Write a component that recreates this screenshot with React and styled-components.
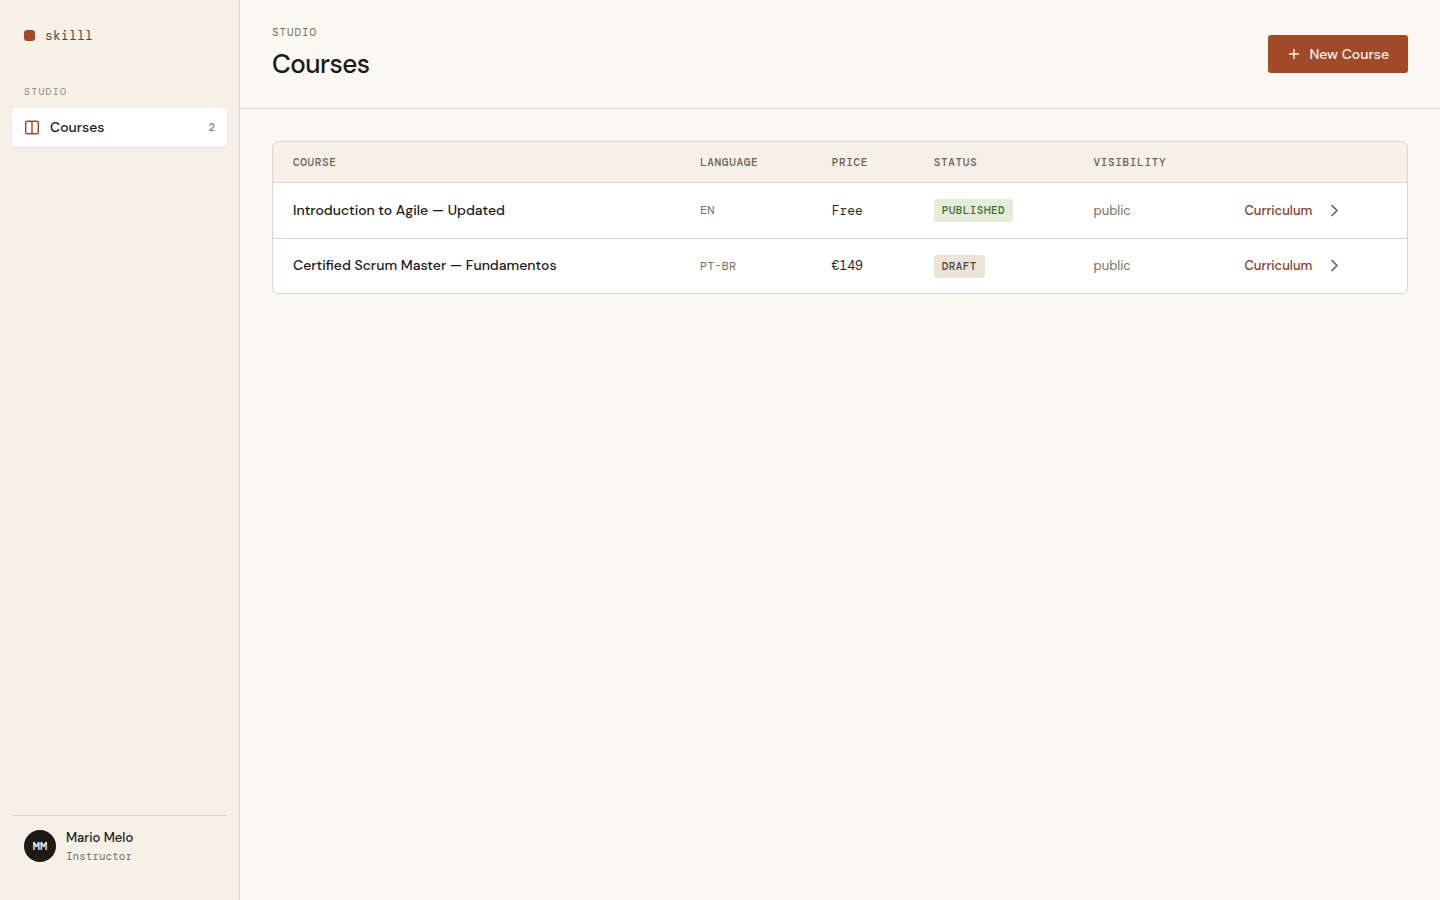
import React from "react";
import styled, { createGlobalStyle } from "styled-components";

const courses = [
  {
    id: 1,
    title: "Introduction to Agile — Updated",
    language: "EN",
    price: "Free",
    status: "Published",
    visibility: "public",
  },
  {
    id: 2,
    title: "Certified Scrum Master — Fundamentos",
    language: "PT-BR",
    price: "€149",
    status: "Draft",
    visibility: "public",
  },
];

const BookIcon = () => (
  <svg width="16" height="16" viewBox="0 0 16 16" fill="none" aria-hidden="true">
    <rect x="1.7" y="1.2" width="12.6" height="12.6" rx="1.5" stroke="currentColor" strokeWidth="1.4" />
    <path d="M8 1.200v12.600" stroke="currentColor" strokeWidth="1.4" />
  </svg>
);

const PlusIcon = () => (
  <svg width="14" height="14" viewBox="0 0 14 14" fill="none" aria-hidden="true">
    <path d="M7 2v10M2 7h10" stroke="currentColor" strokeWidth="1.4" />
  </svg>
);

const ChevronIcon = () => (
  <svg width="16" height="16" viewBox="0 0 16 16" fill="none" aria-hidden="true">
    <path d="M5.500 2L11 7.500 5.500 13" stroke="currentColor" strokeWidth="1.6" />
  </svg>
);

const App = () => {
  return (
    <>
      <GlobalStyle />
      <Layout>
        <Sidebar>
          <Brand href="#">
            <BrandMark />
            skilll
          </Brand>
          <SectionLabel>Studio</SectionLabel>
          <nav>
            <NavItem href="#courses" aria-current="page">
              <BookIcon />
              Courses
              <NavCount>{courses.length}</NavCount>
            </NavItem>
          </nav>
          <UserCard>
            <Avatar>MM</Avatar>
            <div>
              <UserName>Mario Melo</UserName>
              <UserRole>Instructor</UserRole>
            </div>
          </UserCard>
        </Sidebar>
        <Main>
          <PageHeader>
            <div>
              <Eyebrow>Studio</Eyebrow>
              <Title>Courses</Title>
            </div>
            <PrimaryButton type="button">
              <PlusIcon />
              New Course
            </PrimaryButton>
          </PageHeader>
          <Content>
            <TableCard>
              <Table>
                <colgroup>
                  <Col $width="35.9%" />
                  <Col $width="11.6%" />
                  <Col $width="9%" />
                  <Col $width="14.1%" />
                  <Col $width="13.3%" />
                  <Col />
                </colgroup>
                <thead>
                  <tr>
                    <th scope="col">Course</th>
                    <th scope="col">Language</th>
                    <th scope="col">Price</th>
                    <th scope="col">Status</th>
                    <th scope="col">Visibility</th>
                    <th scope="col" aria-label="Actions" />
                  </tr>
                </thead>
                <tbody>
                  {courses.map((course) => {
                    const { id, title, language, price, status, visibility } =
                      course;

                    return (
                      <tr key={id}>
                        <td>
                          <CourseName>{title}</CourseName>
                        </td>
                        <td>
                          <Language>{language}</Language>
                        </td>
                        <td>
                          <Price>{price}</Price>
                        </td>
                        <td>
                          <Badge $published={status === "Published"}>
                            {status}
                          </Badge>
                        </td>
                        <td>
                          <Visibility>{visibility}</Visibility>
                        </td>
                        <td>
                          <Actions>
                            <CurriculumLink href={`#curriculum-${id}`}>
                              Curriculum
                            </CurriculumLink>
                            <IconButton type="button" aria-label={`Open ${title}`}>
                              <ChevronIcon />
                            </IconButton>
                          </Actions>
                        </td>
                      </tr>
                    );
                  })}
                </tbody>
              </Table>
            </TableCard>
          </Content>
        </Main>
      </Layout>
    </>
  );
};

const sans = `"DM Sans", Inter, "Liberation Sans", sans-serif`;
const mono = `"DM Mono", "Liberation Mono", monospace`;

const GlobalStyle = createGlobalStyle`
  * {
    box-sizing: border-box;
  }
  body {
    margin: 0;
    background: #fbf8f3;
    color: #1c1917;
    font-family: ${sans};
    font-size: 14px;
    -webkit-font-smoothing: antialiased;
  }
  svg {
    display: block;
    flex-shrink: 0;
  }
`;

const Layout = styled.div`
  display: grid;
  grid-template-columns: 240px 1fr;
  min-height: 100vh;
`;

const Sidebar = styled.aside`
  display: flex;
  flex-direction: column;
  padding: 24px 12px;
  background: #f5f0e8;
  border-right: 1px solid #ddd5c5;
`;

const Brand = styled.a`
  display: flex;
  align-items: center;
  gap: 10px;
  padding: 0 12px;
  margin-bottom: 37px;
  color: #4f483d;
  font-family: ${mono};
  font-size: 13px;
  line-height: 23px;
  letter-spacing: 0.02em;
  text-decoration: none;
`;

const BrandMark = styled.span`
  width: 11px;
  height: 11px;
  border-radius: 3px;
  background: #a04a29;
`;

const SectionLabel = styled.div`
  padding: 0 12px;
  margin-bottom: 8px;
  color: #928a78;
  font-family: ${mono};
  font-size: 10px;
  line-height: 16px;
  letter-spacing: 0.12em;
  text-transform: uppercase;
`;

const NavItem = styled.a`
  display: flex;
  align-items: center;
  gap: 10px;
  padding: 9px 12px;
  border-radius: 3px;
  background: #ffffff;
  box-shadow: 0 1px 2px rgba(28, 25, 23, 0.08);
  color: #1c1917;
  font-size: 14px;
  font-weight: 500;
  line-height: 21px;
  text-decoration: none;
  svg {
    color: #a04a29;
  }
`;

const NavCount = styled.span`
  margin-left: auto;
  color: #8a8271;
  font-family: ${mono};
  font-size: 11px;
`;

const UserCard = styled.div`
  display: flex;
  align-items: center;
  gap: 10px;
  margin-top: auto;
  padding: 12px;
  border-top: 1px solid #ddd5c5;
`;

const Avatar = styled.div`
  display: grid;
  place-items: center;
  width: 32px;
  height: 32px;
  border-radius: 50%;
  background: #1c1917;
  color: #fbf8f3;
  font-family: ${mono};
  font-size: 12px;
  font-weight: 700;
`;

const UserName = styled.div`
  font-size: 13px;
  font-weight: 500;
  line-height: 20px;
`;

const UserRole = styled.div`
  color: #787061;
  font-family: ${mono};
  font-size: 11px;
  line-height: 16px;
`;

const Main = styled.main`
  min-width: 0;
`;

const PageHeader = styled.header`
  display: flex;
  align-items: center;
  justify-content: space-between;
  padding: 24px 32px;
  border-bottom: 1px solid #ddd5c5;
`;

const Eyebrow = styled.div`
  margin-bottom: 4px;
  color: #787061;
  font-family: ${mono};
  font-size: 11px;
  line-height: 16px;
  letter-spacing: 0.08em;
  text-transform: uppercase;
`;

const Title = styled.h1`
  margin: 0;
  font-size: 26px;
  font-weight: 500;
  line-height: 40px;
  letter-spacing: -0.02em;
`;

const PrimaryButton = styled.button`
  display: inline-flex;
  align-items: center;
  gap: 8px;
  padding: 9px 19px;
  border: 0;
  border-radius: 3px;
  background: #a04a29;
  color: #fbf3ec;
  font-family: inherit;
  font-size: 14px;
  font-weight: 500;
  line-height: 20px;
  cursor: pointer;
`;

const Content = styled.section`
  padding: 32px;
`;

const TableCard = styled.div`
  overflow: hidden;
  border: 1px solid #ddd5c5;
  border-radius: 6px;
  background: #ffffff;
`;

const Table = styled.table`
  width: 100%;
  border-collapse: separate;
  border-spacing: 0;
  table-layout: fixed;
  th {
    height: 41px;
    padding: 0 20px;
    border-bottom: 1px solid #ddd5c5;
    background: #f5f0e8;
    color: #6b6354;
    font-family: ${mono};
    font-size: 11px;
    font-weight: 500;
    letter-spacing: 0.06em;
    text-align: left;
    text-transform: uppercase;
  }
  td {
    height: 56px;
    padding: 0 20px;
    border-bottom: 1px solid #ddd5c5;
    line-height: 20px;
    white-space: nowrap;
  }
  tbody tr:last-child td {
    height: 54px;
    border-bottom: 0;
  }
`;

const Col = styled.col`
  width: ${(props) => props.$width || "auto"};
`;

const CourseName = styled.div`
  padding-bottom: 2px;
  font-size: 14px;
  font-weight: 500;
`;

const Language = styled.div`
  padding-bottom: 1px;
  color: #787061;
  font-family: ${mono};
  font-size: 12px;
`;

const Price = styled.div`
  color: #2b2622;
  font-family: ${mono};
  font-size: 13px;
`;

const Badge = styled.span`
  display: inline-block;
  padding: 3px 8px;
  border-radius: 3px;
  background: ${(props) => (props.$published ? "#e3edd9" : "#ece4d8")};
  color: ${(props) => (props.$published ? "#456b3d" : "#4f483d")};
  font-family: ${mono};
  font-size: 11px;
  font-weight: 500;
  line-height: 17px;
  letter-spacing: 0.04em;
  text-transform: uppercase;
  vertical-align: middle;
`;

const Visibility = styled.div`
  color: #787061;
  font-size: 13px;
`;

const Actions = styled.div`
  display: flex;
  align-items: center;
  gap: 6px;
`;

const CurriculumLink = styled.a`
  color: #8a3a1f;
  font-size: 13px;
  font-weight: 500;
  text-decoration: none;
`;

const IconButton = styled.button`
  padding: 8px;
  border: 0;
  background: transparent;
  color: #6b6354;
  cursor: pointer;
`;

export default App;
